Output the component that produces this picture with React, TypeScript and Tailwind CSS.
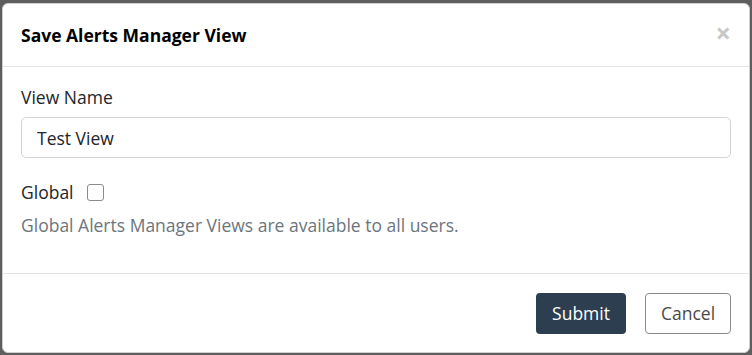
import React, { useState } from 'react';

export default function App() {
  const [name, setName] = useState('Test View');
  const [global, setGlobal] = useState(false);

  return (
    <div
      className="w-[752px] h-[355px] bg-[#5e5e5e] pt-[3px] pl-[2px] pr-[2px] overflow-hidden"
      style={{ fontFamily: '"Open Sans", "Liberation Sans", sans-serif' }}
    >
      <div className="w-[748px] h-[350px] bg-white rounded-[6px] border border-[#d0d0d0] flex flex-col">
        <div className="h-[63px] flex items-center justify-between px-[18px] border-b border-[#e5e5e5]">
          <h2 className="text-[17.5px] font-bold text-black">Save Alerts Manager View</h2>
          <button className="text-[#c8c8c8] text-[27px] leading-none font-bold mr-[0px] mt-[-5px]">×</button>
        </div>

        <div className="flex-1 px-[18px] pt-[18px] border-b border-[#e5e5e5]">
          <label className="block text-[17.5px] text-[#212529] leading-[24px]">View Name</label>
          <input
            value={name}
            onChange={(e) => setName(e.target.value)}
            className="mt-[8px] w-full h-[41px] rounded-[5px] border border-[#d4d4d4] px-[15px] text-[17.5px] text-[#212529] outline-none"
          />
          <div className="mt-[22px] flex items-center gap-[13px]">
            <span className="text-[17.5px] text-[#212529] leading-[24px]">Global</span>
            <input
              type="checkbox"
              checked={global}
              onChange={() => setGlobal(!global)}
              className="appearance-none w-[17px] h-[17px] rounded-[3px] border border-[#8a8a8a] bg-white"
            />
          </div>
          <p className="mt-[9px] text-[17.5px] text-[#6c757d] leading-[24px]">
            Global Alerts Manager Views are available to all users.
          </p>
        </div>

        <div className="h-[78px] flex items-center justify-end gap-[19px] px-[18px]">
          <button className="w-[90px] h-[41px] rounded-[4px] bg-[#2c3e50] text-white text-[17.5px]">Submit</button>
          <button className="w-[86px] h-[41px] rounded-[4px] border border-[#8a8a8a] text-[#4a4a4a] text-[17.5px] bg-white">
            Cancel
          </button>
        </div>
      </div>
    </div>
  );
}
